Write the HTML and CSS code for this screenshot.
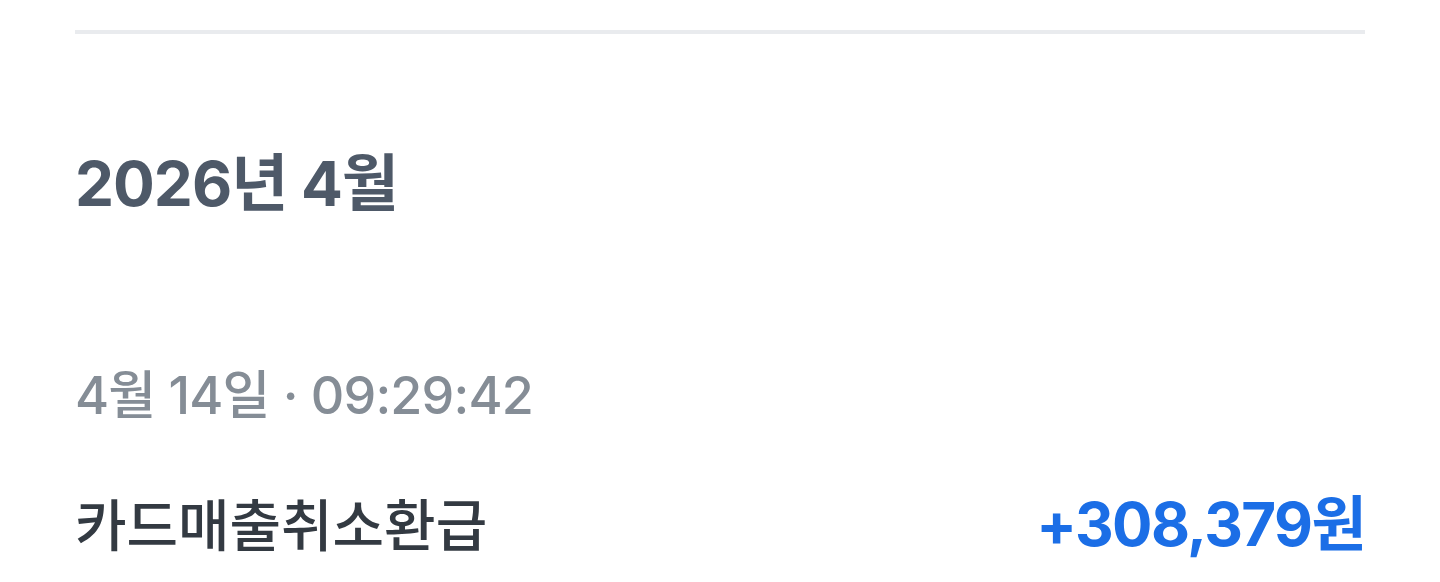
FILE: index.html
```html
<!DOCTYPE html>
<html lang="ko">
<head>
<meta charset="utf-8">
<link rel="stylesheet" href="styles.css">
</head>
<body>
<div class="page">
  <div class="divider"></div>
  <h2 class="month">2026년 4월</h2>
  <div class="meta">4월 14일 · 09:29:42</div>
  <div class="row">
    <span class="title">카드매출취소환급</span>
    <span class="amount">+308,379원</span>
  </div>
</div>
</body>
</html>
```
FILE: styles.css
```css
html, body {
  margin: 0;
  padding: 0;
  background: #ffffff;
}
body {
  font-family: Inter, "Noto Sans CJK KR", sans-serif;
}
.page {
  padding: 30px 75px 0 75px;
  height: 552px;
  overflow: hidden;
}
.divider {
  height: 4px;
  background: #e9ebee;
}
.month {
  margin: 0;
  margin-top: 112px;
  font-size: 62px;
  line-height: 76px;
  font-weight: 700;
  color: #4e5968;
  letter-spacing: -1px;
}
.meta {
  margin-top: 142px;
  font-size: 52px;
  line-height: 64px;
  font-weight: 500;
  color: #858d96;
  letter-spacing: -0.8px;
}
.row {
  margin-top: 61px;
  display: flex;
  justify-content: space-between;
  align-items: baseline;
}
.title {
  font-size: 56px;
  line-height: 70px;
  font-weight: 500;
  color: #333a42;
  letter-spacing: 0;
}
.amount {
  font-size: 60px;
  line-height: 70px;
  font-weight: 700;
  color: #1b6ee6;
  letter-spacing: -1.6px;
}
```
